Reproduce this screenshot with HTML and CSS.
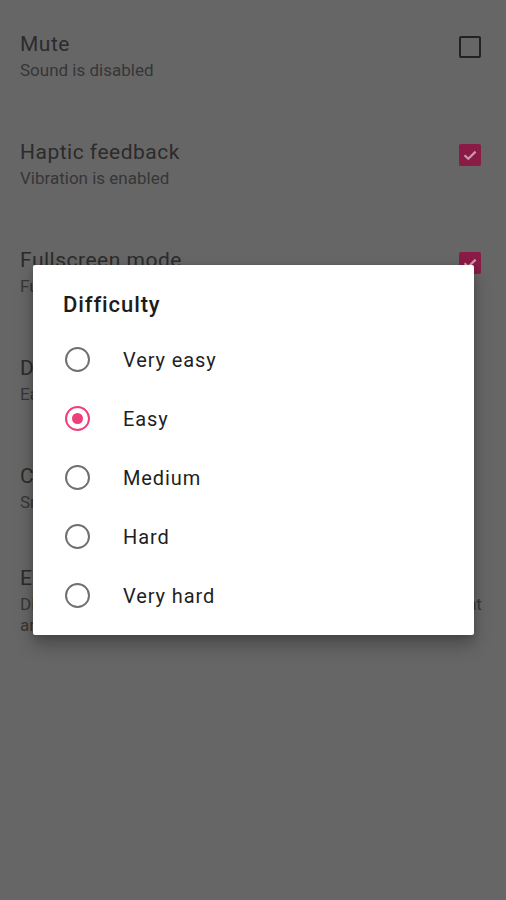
FILE: index.html
```html
<!DOCTYPE html>
<html lang="en">
<head>
<meta charset="utf-8">
<title>Settings</title>
<link rel="stylesheet" href="styles.css">
</head>
<body>
<div class="settings">
  <div class="row">
    <div class="text">
      <div class="title">Mute</div>
      <div class="sub">Sound is disabled</div>
    </div>
    <span class="check"></span>
  </div>
  <div class="row">
    <div class="text">
      <div class="title">Haptic feedback</div>
      <div class="sub">Vibration is enabled</div>
    </div>
    <span class="check on"><svg viewBox="0 0 22 22" width="22" height="22"><path d="M5.5 11.2 9.3 14.8 16.6 7.6" fill="none" stroke="#c79aac" stroke-width="2.2"/></svg></span>
  </div>
  <div class="row">
    <div class="text">
      <div class="title">Fullscreen mode</div>
      <div class="sub">Fullscreen is enabled</div>
    </div>
    <span class="check on"><svg viewBox="0 0 22 22" width="22" height="22"><path d="M5.5 11.2 9.3 14.8 16.6 7.6" fill="none" stroke="#c79aac" stroke-width="2.2"/></svg></span>
  </div>
  <div class="row">
    <div class="text">
      <div class="title">Difficulty</div>
      <div class="sub">Easy</div>
    </div>
  </div>
  <div class="row">
    <div class="text">
      <div class="title">Cell size</div>
      <div class="sub">Small</div>
    </div>
  </div>
  <div class="row last">
    <div class="text">
      <div class="title">Error highlighting</div>
      <div class="sub">Display a warning when any number conflicts with the current<br>arrangement</div>
    </div>
  </div>
</div>

<div class="dialog">
  <div class="dlg-title">Difficulty</div>
  <ul class="options">
    <li class="option"><span class="radio"></span><span class="label">Very easy</span></li>
    <li class="option"><span class="radio sel"></span><span class="label">Easy</span></li>
    <li class="option"><span class="radio"></span><span class="label">Medium</span></li>
    <li class="option"><span class="radio"></span><span class="label">Hard</span></li>
    <li class="option"><span class="radio"></span><span class="label">Very hard</span></li>
  </ul>
</div>
</body>
</html>
```
FILE: styles.css
```css
html, body {
  margin: 0;
  padding: 0;
  background: #666666;
  font-family: Roboto, "Noto Sans", sans-serif;
}
body {
  width: 506px;
  height: 900px;
  position: relative;
  overflow: hidden;
}
.settings {
  display: flex;
  flex-direction: column;
}
.row {
  height: 108px;
  box-sizing: border-box;
  padding: 30px 25px 0 20px;
  display: flex;
  justify-content: space-between;
  align-items: flex-start;
}
.row.last {
  padding-top: 24px;
}
.title {
  font-size: 21px;
  line-height: 28px;
  letter-spacing: 0.5px;
  color: #2b2b2b;
}
.sub {
  margin-top: 2px;
  font-size: 17px;
  line-height: 21px;
  color: #363636;
  white-space: nowrap;
}
.check {
  margin-top: 6px;
  width: 22px;
  height: 22px;
  box-sizing: border-box;
  border: 2px solid #222222;
  border-radius: 2px;
  flex: none;
  display: block;
}
.check.on {
  background: #8a1a46;
  border: none;
}
.check svg {
  display: block;
}
.dialog {
  position: absolute;
  left: 33px;
  top: 265px;
  width: 441px;
  height: 370px;
  background: #ffffff;
  border-radius: 2px;
  box-shadow: 0 10px 18px rgba(0, 0, 0, 0.28), 0 2px 6px rgba(0, 0, 0, 0.15);
  box-sizing: border-box;
  padding-top: 26px;
}
.dlg-title {
  padding-left: 30px;
  font-size: 22px;
  font-weight: 500;
  line-height: 28px;
  letter-spacing: 0.9px;
  color: #1c1c1c;
}
.options {
  list-style: none;
  margin: 11px 0 0;
  padding: 0;
}
.option {
  height: 59px;
  display: flex;
  align-items: center;
  padding-left: 32px;
}
.radio {
  width: 25px;
  height: 25px;
  box-sizing: border-box;
  border: 2px solid #707070;
  border-radius: 50%;
  flex: none;
  position: relative;
}
.radio.sel {
  border-color: #ec407a;
}
.radio.sel::after {
  content: "";
  position: absolute;
  left: 5px;
  top: 5px;
  width: 11px;
  height: 11px;
  border-radius: 50%;
  background: #ec407a;
}
.label {
  margin-left: 33px;
  font-size: 20px;
  letter-spacing: 0.9px;
  color: #1f1f1f;
}
```
